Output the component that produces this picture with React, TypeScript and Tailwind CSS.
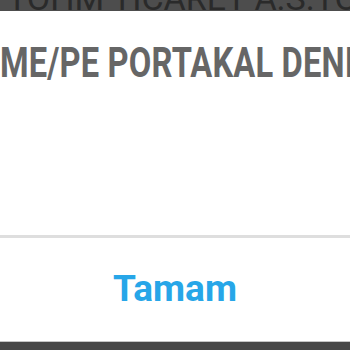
export default function App() {
  return (
    <div className="flex h-[350px] w-[350px] flex-col overflow-hidden bg-white font-['Roboto',sans-serif]">
      {/* header strip, text cut off at the top */}
      <div className="flex h-[11px] shrink-0 items-end overflow-hidden bg-[#4d4d4d]">
        <span className="mb-[-4px] whitespace-nowrap pl-[7px] text-[34px] leading-none font-normal text-[#2a2a2a]">
          TOHM TICARET A.S.TOT
        </span>
      </div>

      {/* dialog body */}
      <div className="flex h-[224px] shrink-0 flex-col overflow-hidden">
        <div className="mt-[30px] origin-left scale-x-[0.76] whitespace-nowrap text-[43px] leading-none font-bold tracking-[0.2px] text-[#666666]">
          ME/PE PORTAKAL DENIZ
        </div>
      </div>

      <div className="h-[3px] shrink-0 bg-[#dedede]" />

      <button
        type="button"
        className="flex h-[103px] shrink-0 items-center justify-center pb-[2px] text-[37px] leading-none font-bold text-[#27a6e8]"
      >
        Tamam
      </button>

      <div className="h-px shrink-0 bg-[#c4c4c4]" />
      <div className="flex-1 bg-[#464646]" />
    </div>
  );
}
